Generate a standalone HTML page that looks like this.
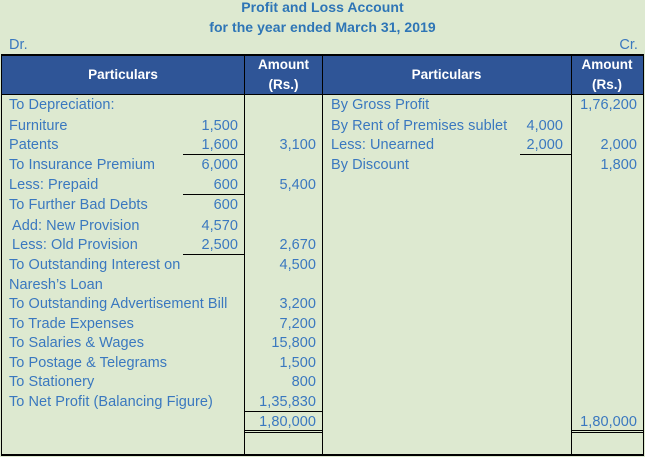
<!DOCTYPE html>
<html><head><meta charset="utf-8"><style>
body{margin:0;width:645px;height:457px;background:#dde9d0;position:relative;overflow:hidden;font-family:"Liberation Sans",sans-serif;color:#3a78bf;}
.t{position:absolute;font-size:14.5px;line-height:20px;white-space:nowrap;letter-spacing:0.05px}
.r{text-align:right}
.h{position:absolute;background:#000;height:1px}
.v{position:absolute;background:#000;width:1px}
.b{font-weight:bold;color:#fff;font-size:13.5px;position:absolute;text-align:center;line-height:20px}
</style></head><body>
<div class="t" style="left:0;width:645px;text-align:center;top:-3px;font-weight:bold;font-size:14px;color:#2e75b6">Profit and Loss Account</div>
<div class="t" style="left:0;width:645px;text-align:center;top:17px;font-weight:bold;font-size:14px;color:#2e75b6">for the year ended March 31, 2019</div>
<div class="t" style="left:9px;top:35px">Dr.</div>
<div class="t" style="right:7px;top:35px">Cr.</div>
<div style="position:absolute;left:1px;top:55px;width:642px;height:39px;background:#2f5597"></div>
<div class="b" style="left:1px;width:244px;top:65px">Particulars</div>
<div class="b" style="left:245px;width:77px;top:55px">Amount<br>(Rs.)</div>
<div class="b" style="left:322px;width:249px;top:65px">Particulars</div>
<div class="b" style="left:571px;width:72px;top:55px">Amount<br>(Rs.)</div>
<div class="h" style="left:1px;width:643px;top:54px;height:2px"></div>
<div class="h" style="left:1px;width:643px;top:94px"></div>
<div class="h" style="left:1px;width:643px;top:454px;height:2px"></div>
<div class="v" style="left:1px;top:54px;height:402px"></div>
<div class="v" style="left:643px;top:54px;height:402px"></div>
<div class="v" style="left:244px;top:54px;height:402px"></div>
<div class="v" style="left:322px;top:54px;height:402px"></div>
<div class="v" style="left:571px;top:54px;height:402px"></div>
<div class="h" style="left:183px;width:61px;top:154px"></div>
<div class="h" style="left:183px;width:61px;top:194px"></div>
<div class="h" style="left:183px;width:61px;top:254px"></div>
<div class="h" style="left:520px;width:51px;top:154px"></div>
<div class="h" style="left:244px;width:78px;top:411px"></div>
<div class="h" style="left:244px;width:78px;top:430px"></div>
<div class="h" style="left:244px;width:78px;top:432px"></div>
<div class="h" style="left:571px;width:72px;top:430px"></div>
<div class="h" style="left:571px;width:72px;top:432px"></div>
<div class="t" style="left:9px;top:95px">To Depreciation:</div>
<div class="t" style="left:9px;top:116px">Furniture</div>
<div class="t" style="left:9px;top:135px">Patents</div>
<div class="t" style="left:9px;top:155px">To Insurance Premium</div>
<div class="t" style="left:9px;top:175px">Less: Prepaid</div>
<div class="t" style="left:9px;top:195px">To Further Bad Debts</div>
<div class="t" style="left:12px;top:216px">Add: New Provision</div>
<div class="t" style="left:12px;top:235px">Less: Old Provision</div>
<div class="t" style="left:9px;top:255px">To Outstanding Interest on</div>
<div class="t" style="left:9px;top:275px">Naresh’s Loan</div>
<div class="t" style="left:9px;top:294px">To Outstanding Advertisement Bill</div>
<div class="t" style="left:9px;top:314px">To Trade Expenses</div>
<div class="t" style="left:9px;top:333px">To Salaries &amp; Wages</div>
<div class="t" style="left:9px;top:353px">To Postage &amp; Telegrams</div>
<div class="t" style="left:9px;top:372px">To Stationery</div>
<div class="t" style="left:9px;top:392px">To Net Profit (Balancing Figure)</div>
<div class="t r" style="right:407px;top:116px">1,500</div>
<div class="t r" style="right:407px;top:135px">1,600</div>
<div class="t r" style="right:407px;top:155px">6,000</div>
<div class="t r" style="right:407px;top:175px">600</div>
<div class="t r" style="right:407px;top:195px">600</div>
<div class="t r" style="right:407px;top:216px">4,570</div>
<div class="t r" style="right:407px;top:235px">2,500</div>
<div class="t r" style="right:329px;top:135px">3,100</div>
<div class="t r" style="right:329px;top:175px">5,400</div>
<div class="t r" style="right:329px;top:235px">2,670</div>
<div class="t r" style="right:329px;top:255px">4,500</div>
<div class="t r" style="right:329px;top:294px">3,200</div>
<div class="t r" style="right:329px;top:314px">7,200</div>
<div class="t r" style="right:329px;top:333px">15,800</div>
<div class="t r" style="right:329px;top:353px">1,500</div>
<div class="t r" style="right:329px;top:372px">800</div>
<div class="t r" style="right:329px;top:392px">1,35,830</div>
<div class="t r" style="right:329px;top:412px">1,80,000</div>
<div class="t" style="left:331px;top:95px">By Gross Profit</div>
<div class="t" style="left:331px;top:116px">By Rent of Premises sublet</div>
<div class="t" style="left:331px;top:135px">Less: Unearned</div>
<div class="t" style="left:331px;top:155px">By Discount</div>
<div class="t r" style="right:82px;top:116px">4,000</div>
<div class="t r" style="right:82px;top:135px">2,000</div>
<div class="t r" style="right:8px;top:95px">1,76,200</div>
<div class="t r" style="right:8px;top:135px">2,000</div>
<div class="t r" style="right:8px;top:155px">1,800</div>
<div class="t r" style="right:8px;top:412px">1,80,000</div>
</body></html>
